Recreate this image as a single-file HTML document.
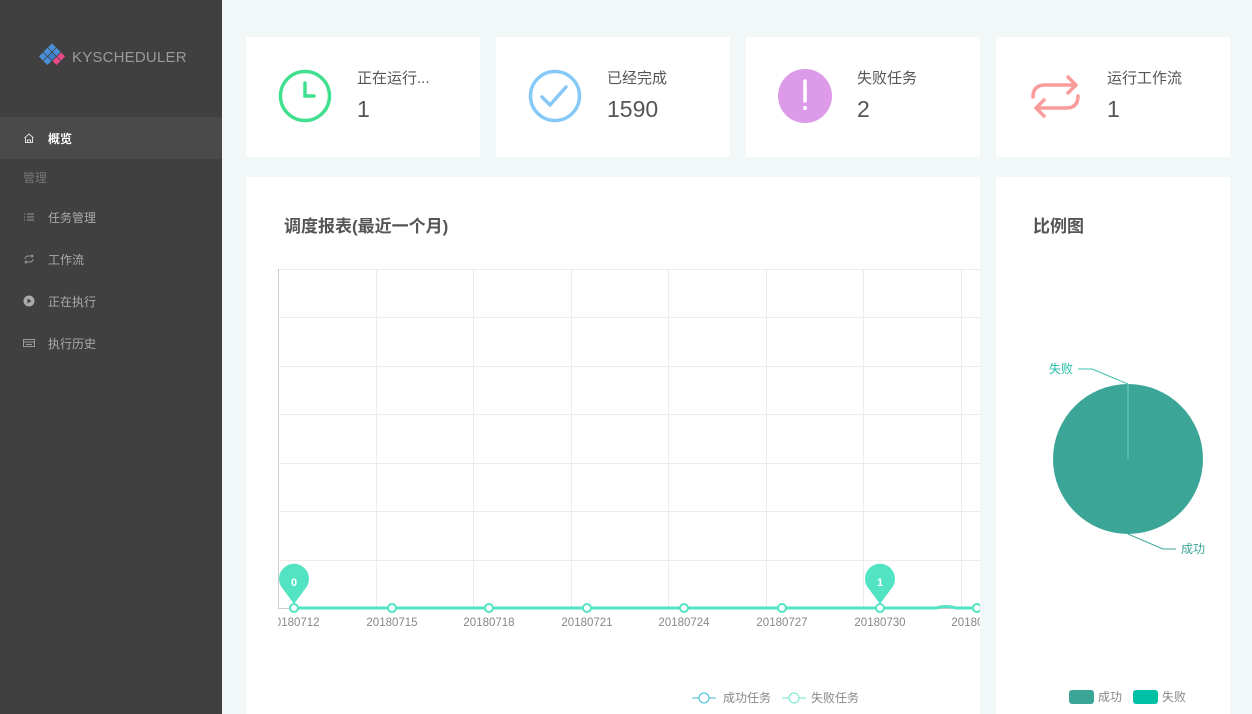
<!DOCTYPE html>
<html><head><meta charset="utf-8"><style>
*{margin:0;padding:0;box-sizing:border-box}
body{width:1252px;height:714px;overflow:hidden;background:#f1f8f7;font-family:"Liberation Sans","Noto Sans CJK SC",sans-serif;position:relative}
.side{position:absolute;left:0;top:0;width:222px;height:714px;background:#404040}
.logo{position:absolute;left:37px;top:43px;display:flex;align-items:center;color:#9a9a9a;font-size:15px;letter-spacing:0.2px}
.nav{position:absolute;left:0;width:222px;height:42px;display:flex;align-items:center;font-size:12px;color:#aaa}
.nav .ic{position:absolute;left:23px;width:12px;height:12px}
.nav span{position:absolute;left:48px}
.card{position:absolute;background:#fff}
.stat{top:37px;height:120px;width:234px}
.stat .ico{position:absolute;left:32px;top:32px}
.stat .t{position:absolute;left:111px;top:30px;font-size:15px;color:#555}
.stat .n{position:absolute;left:111px;top:59px;font-size:23px;color:#555}
.h{position:absolute;font-size:17px;color:#555;font-weight:bold}
</style></head><body>
<div class="side">
 <div class="logo"><svg width="30" height="28" viewBox="0 0 28 26">
  <g transform="rotate(45 14 13)">
  <rect x="5" y="4" width="5.3" height="5.3" fill="#4a8fd6"/><rect x="11" y="4" width="5.3" height="5.3" fill="#4a8fd6"/><rect x="17" y="4" width="5.3" height="5.3" fill="#e84a8a"/>
  <rect x="5" y="10" width="5.3" height="5.3" fill="#4a8fd6"/><rect x="11" y="10" width="5.3" height="5.3" fill="#3a7cc4"/><rect x="17" y="10" width="5.3" height="5.3" fill="#e84a8a"/>
  <rect x="5" y="16" width="5.3" height="5.3" fill="#4a8fd6"/><rect x="11" y="16" width="5.3" height="5.3" fill="#4a8fd6"/></g></svg>
  <span style="margin-left:5px">KYSCHEDULER</span></div>
 <div class="nav" style="top:117px;background:#4a4a4a;color:#fff;font-weight:bold"><svg class="ic" viewBox="0 0 12 12"><path d="M1.5 6L6 2l4.5 4M2.5 5.5V10.5h7V5.5M4.5 10.5V8h3v2.5" fill="none" stroke="#ddd" stroke-width="1"/></svg><span>概览</span></div>
 <div class="nav" style="top:156px;color:#777"><span style="left:23px">管理</span></div>
 <div class="nav" style="top:196px"><svg class="ic" viewBox="0 0 12 12"><path d="M1 3h1M1 6h1M1 9h1M4 3h7M4 6h7M4 9h7" stroke="#999" stroke-width="1"/></svg><span>任务管理</span></div>
 <div class="nav" style="top:238px"><svg class="ic" viewBox="0 0 12 12"><path d="M2 6a3 3 0 0 1 3-3h5M8.5 1.5L10 3 8.5 4.5M10 6a3 3 0 0 1-3 3H2M3.5 10.5L2 9l1.5-1.5" fill="none" stroke="#999" stroke-width="1"/></svg><span>工作流</span></div>
 <div class="nav" style="top:280px"><svg class="ic" viewBox="0 0 12 12"><circle cx="6" cy="6" r="5.5" fill="#aaa"/><path d="M4.5 3.5v5l4-2.5z" fill="#404040"/></svg><span>正在执行</span></div>
 <div class="nav" style="top:322px"><svg class="ic" viewBox="0 0 12 12"><rect x="0.5" y="2.5" width="11" height="7" fill="none" stroke="#999"/><path d="M0.5 5h11M3 7.5h6" stroke="#999"/></svg><span>执行历史</span></div>
</div>

<div class="card stat" style="left:246px"><svg class="ico" width="54" height="54"><circle cx="27" cy="27" r="24.5" fill="none" stroke="#40e090" stroke-width="3.5"/><path d="M27 14v13h9" fill="none" stroke="#40e090" stroke-width="3.5" stroke-linecap="round"/></svg><div class="t">正在运行...</div><div class="n">1</div></div>
<div class="card stat" style="left:496px"><svg class="ico" width="54" height="54"><circle cx="27" cy="27" r="24.5" fill="none" stroke="#86c8f7" stroke-width="3.5"/><path d="M14 28l8 8 16-18" fill="none" stroke="#86c8f7" stroke-width="3.5" stroke-linecap="round" stroke-linejoin="round"/></svg><div class="t">已经完成</div><div class="n">1590</div></div>
<div class="card stat" style="left:746px"><svg class="ico" width="54" height="54"><circle cx="27" cy="27" r="27" fill="#dc9ae8"/><path d="M27 12v20" stroke="#fff" stroke-width="3.5" stroke-linecap="round"/><circle cx="27" cy="39" r="2" fill="#fff"/></svg><div class="t">失败任务</div><div class="n">2</div></div>
<div class="card stat" style="left:996px"><svg class="ico" width="56" height="56"><path d="M5 28Q5 16 17 16H48M40 8L48 16 40 24M50 27Q50 39 38 39H8M16 31L8 39 16 47" fill="none" stroke="#f99b9b" stroke-width="3.5" stroke-linecap="round" stroke-linejoin="round"/></svg><div class="t">运行工作流</div><div class="n">1</div></div>

<div class="card" style="left:246px;top:177px;width:734px;height:537px">
 <div class="h" style="left:38px;top:35px">调度报表(最近一个月)</div>
</div>
<svg style="position:absolute;left:246px;top:177px" width="734" height="537">
 <g stroke="#ececec" stroke-width="1">
  <path d="M32 92.5H734M32 140.5H734M32 189.5H734M32 237.5H734M32 286.5H734M32 334.5H734M32 383.5H734"/>
  <path d="M130.5 92V431M227.5 92V431M325.5 92V431M422.5 92V431M520.5 92V431M617.5 92V431M715.5 92V431"/>
 </g>
 <path d="M32.5 92V431.5H734" stroke="#ccc" fill="none"/>
 <path d="M48 431H690Q700 428 710 431H734" stroke="#52e3c2" stroke-width="3" fill="none"/>
 <g fill="#fff" stroke="#52e3c2" stroke-width="2">
  <circle cx="48" cy="431" r="4"/><circle cx="146" cy="431" r="4"/><circle cx="243" cy="431" r="4"/><circle cx="341" cy="431" r="4"/><circle cx="438" cy="431" r="4"/><circle cx="536" cy="431" r="4"/><circle cx="634" cy="431" r="4"/><circle cx="731" cy="431" r="4"/>
 </g>
 <g fill="#52e3c2"><path d="M48 427L37 412A15 15 0 1 1 59 412Z"/><path d="M634 427L623 412A15 15 0 1 1 645 412Z"/></g>
 <g fill="#fff" font-size="11" font-weight="bold" text-anchor="middle" font-family="Liberation Sans"><text x="48" y="409">0</text><text x="634" y="409">1</text></g>
 <g fill="#888" font-size="11.5" text-anchor="middle" font-family="Liberation Sans">
  <text x="48" y="449">20180712</text><text x="146" y="449">20180715</text><text x="243" y="449">20180718</text><text x="341" y="449">20180721</text><text x="438" y="449">20180724</text><text x="536" y="449">20180727</text><text x="634" y="449">20180730</text><text x="731" y="449">20180802</text>
 </g>
 <rect x="0" y="435" width="32" height="20" fill="#fff"/>
 <g font-family="Liberation Sans,Noto Sans CJK SC,sans-serif" font-size="12" fill="#888">
  <path d="M446 521h24" stroke="#3bbde0"/><circle cx="458" cy="521" r="5" fill="#fff" stroke="#3bbde0"/><text x="477" y="525">成功任务</text>
  <path d="M536 521h24" stroke="#6fe8cc"/><circle cx="548" cy="521" r="5" fill="#fff" stroke="#6fe8cc"/><text x="565" y="525">失败任务</text>
 </g>
</svg>

<div class="card" style="left:996px;top:177px;width:234px;height:537px">
 <div class="h" style="left:37px;top:35px">比例图</div>
 <svg style="position:absolute;left:0;top:0" width="234" height="537">
  <circle cx="132" cy="282" r="75" fill="#3ba597"/>
  <path d="M132 282V207" stroke="#6dd5c5" stroke-width="1"/>
  <path d="M132 207L96 192H82" stroke="#3ec0ac" fill="none"/>
  <path d="M132 357L167 372H180" stroke="#3ba597" fill="none"/>
  <text x="53" y="196" font-size="12" fill="#1fbfa5">失败</text>
  <text x="185" y="376" font-size="12" fill="#3ba597">成功</text>
  <rect x="73" y="513" width="25" height="14" rx="3" fill="#3ba597"/><text x="102" y="524" font-size="12" fill="#888">成功</text>
  <rect x="137" y="513" width="25" height="14" rx="3" fill="#00c0a5"/><text x="166" y="524" font-size="12" fill="#888">失败</text>
 </svg>
</div>
</body></html>
